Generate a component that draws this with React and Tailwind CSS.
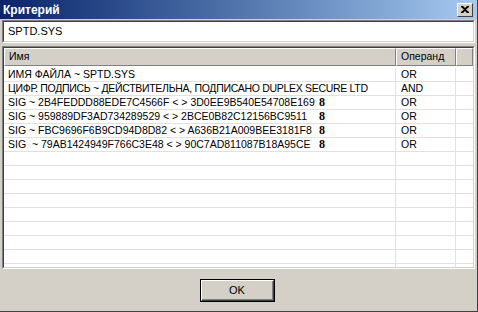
import React from 'react'

const rows = [
  { name: 'ИМЯ ФАЙЛА ~ SPTD.SYS', op: 'OR' },
  { name: 'ЦИФР. ПОДПИСЬ ~ ДЕЙСТВИТЕЛЬНА, ПОДПИСАНО DUPLEX SECURE LTD', op: 'AND', tight: true },
  { name: 'SIG ~ 2B4FEDDD88EDE7C4566F < > 3D0EE9B540E54708E169', op: 'OR', mark: true },
  { name: 'SIG ~ 959889DF3AD734289529 < > 2BCE0B82C12156BC9511', op: 'OR', mark: true },
  { name: 'SIG ~ FBC9696F6B9CD94D8D82 < > A636B21A009BEE3181F8', op: 'OR', mark: true },
  { name: 'SIG \u00a0~ 79AB1424949F766C3E48 < > 90C7AD811087B18A95CE', op: 'OR', mark: true },
]

// empty rows to keep the grid lines going down to the bottom of the list
const filler = Array.from({ length: 9 })

function Row({ name, op, mark, tight }) {
  return (
    <div className="flex h-[14px] border-b border-[#e3e1dc] leading-[13px]">
      <div className="w-[392px] flex items-center pl-[4px] border-r border-[#e3e1dc] whitespace-nowrap overflow-hidden">
        <span className={mark ? 'w-[311px] shrink-0' : tight ? 'tracking-[-0.3px]' : ''}>{name}</span>
        {mark && <span className="font-['Liberation_Serif',serif] font-bold text-[12px] leading-[12px] -mt-[2px]">8</span>}
      </div>
      <div className="w-[60px] flex items-center pl-[5px] border-r border-[#e3e1dc]">{op}</div>
      <div className="flex-1"></div>
    </div>
  )
}

export default function App() {
  return (
    <div className="w-[478px] h-[312px] bg-[#d4d0c8] flex flex-col border-r border-b border-[#404040] font-['Liberation_Sans',sans-serif] text-[10.5px] text-black overflow-hidden">
      {/* title bar */}
      <div className="h-[19px] shrink-0 flex items-center justify-between pl-[3px] pr-[3px] bg-gradient-to-r from-[#0a246a] to-[#a6caf0]">
        <span className="text-white font-bold text-[12px]">Критерий</span>
        <button className="w-[16px] h-[14px] mr-[1px] bg-[#d4d0c8] border border-t-white border-l-white border-r-[#404040] border-b-[#404040] flex items-center justify-center">
          <svg width="8" height="7" viewBox="0 0 8 7">
            <path d="M0 0h2l2 2 2-2h2v1L5 3.5 8 6v1H6L4 5 2 7H0V6l3-2.5L0 1z" fill="black" />
          </svg>
        </button>
      </div>

      <div className="flex flex-col flex-1 pl-[2px] pr-[2px] pt-[1px]">
        {/* text field */}
        <div className="h-[23px] border border-t-[#808080] border-l-[#808080] border-r-white border-b-white">
          <div className="h-full bg-white border border-t-[#404040] border-l-[#404040] border-r-[#d4d0c8] border-b-[#d4d0c8] flex items-center pl-[4px] text-[11px]">
            SPTD.SYS
          </div>
        </div>

        {/* list */}
        <div className="mt-[3px] h-[223px] border border-t-[#808080] border-l-[#808080] border-r-white border-b-white">
          <div className="h-full bg-white border border-t-[#404040] border-l-[#404040] border-r-[#d4d0c8] border-b-[#d4d0c8] overflow-hidden">
            <div className="flex h-[18px] bg-[#d4d0c8] mb-[2px]">
              <div className="w-[392px] border border-t-white border-l-white border-r-[#808080] border-b-[#808080] flex items-center pl-[4px]">Имя</div>
              <div className="w-[60px] border border-t-white border-l-white border-r-[#808080] border-b-[#808080] flex items-center pl-[4px]">Операнд</div>
              <div className="flex-1 border border-t-white border-l-white border-r-[#808080] border-b-[#808080]"></div>
            </div>
            {rows.map((r, i) => (
              <Row key={i} {...r} />
            ))}
            {filler.map((_, i) => (
              <Row key={'f' + i} name="" op="" />
            ))}
          </div>
        </div>

        {/* buttons */}
        <div className="flex justify-center pt-[10px] pr-[2px]">
          <button className="w-[75px] h-[23px] border border-black bg-[#d4d0c8] text-[11px]">
            <div className="h-full border border-t-white border-l-white border-r-[#404040] border-b-[#404040] flex items-center justify-center">
              <div className="h-full w-full border-r border-b border-[#808080] flex items-center justify-center">OK</div>
            </div>
          </button>
        </div>
      </div>
    </div>
  )
}
